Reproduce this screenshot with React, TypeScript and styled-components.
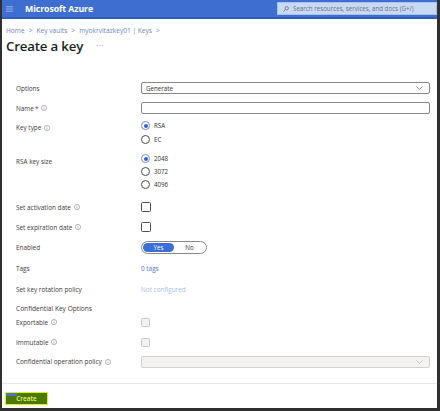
import { Fragment } from 'react'
import styled, { createGlobalStyle } from 'styled-components'

const GlobalStyle = createGlobalStyle`
  html, body {
    margin: 0;
    padding: 0;
    background: #ffffff;
  }
  body {
    font-family: 'Open Sans', 'Noto Sans', sans-serif;
    color: #323130;
  }
`

const Frame = styled.div`
  box-sizing: border-box;
  width: 440px;
  height: 411px;
  border-left: 2px solid #2f2f2f;
  border-right: 3px solid #2f2f2f;
  border-bottom: 3px solid #2f2f2f;
  display: flex;
  flex-direction: column;
  overflow: hidden;
`

const TopBar = styled.header`
  height: 17px;
  background: #3e6fd0;
  border-bottom: 2px solid #2f5dbd;
  display: flex;
  align-items: center;
  padding-left: 4px;
`

const Brand = styled.span`
  margin-left: 12px;
  font-size: 8.8px;
  font-weight: 700;
  color: #ffffff;
  letter-spacing: -0.1px;
`

const SearchBox = styled.div`
  margin-left: auto;
  width: 160px;
  height: 13px;
  box-sizing: border-box;
  background: #c8d9f4;
  border: 1px solid #a9c2ec;
  display: flex;
  align-items: center;
  gap: 4px;
  padding-left: 5px;
  font-size: 6.2px;
  color: #6b7280;
`

const Breadcrumb = styled.nav`
  margin: 7px 0 0 4px;
  font-size: 6.6px;
  color: #6d87c3;
  display: flex;
  align-items: center;
  gap: 4px;
`

const TitleRow = styled.div`
  margin: 2px 0 0 4px;
  display: flex;
  align-items: center;
  gap: 13px;
`

const Title = styled.h1`
  margin: 0;
  font-size: 13.3px;
  font-weight: 600;
  color: #201f1e;
  letter-spacing: -0.2px;
`

const More = styled.span`
  font-size: 8px;
  color: #8a8886;
  letter-spacing: 0.5px;
  margin-top: -3px;
`

const Form = styled.div`
  padding: 0 4px 0 14px;
  margin-top: 27px;
  display: flex;
  flex-direction: column;
`

const Row = styled.div<{ $gap: number; $h: number; $top?: boolean }>`
  margin-top: ${(p) => p.$gap}px;
  min-height: ${(p) => p.$h}px;
  display: grid;
  grid-template-columns: 125px 1fr;
  align-items: ${(p) => (p.$top ? 'start' : 'center')};
`

const Label = styled.div<{ $offset?: number }>`
  font-size: 6.4px;
  color: #3b3a39;
  display: flex;
  align-items: center;
  gap: 3px;
  margin-top: ${(p) => p.$offset ?? 0}px;
`

const Required = styled.span`
  color: #c50f1f;
  margin-left: -2px;
`

const SectionHeading = styled.div<{ $gap: number }>`
  margin-top: ${(p) => p.$gap}px;
  font-size: 6.6px;
  color: #3b3a39;
`

const Field = styled.div<{ $disabled?: boolean }>`
  box-sizing: border-box;
  height: 12px;
  border: 1px solid ${(p) => (p.$disabled ? '#d2d0ce' : '#8a8886')};
  border-radius: 2px;
  background: ${(p) => (p.$disabled ? '#f3f2f1' : '#ffffff')};
  display: flex;
  align-items: center;
  justify-content: space-between;
  padding: 0 6px 0 4px;
  font-size: 6.2px;
  color: #323130;
  margin-right: 3px;
`

const RadioList = styled.div<{ $step: number }>`
  display: flex;
  flex-direction: column;
  gap: ${(p) => p.$step}px;
`

const RadioItem = styled.label`
  display: flex;
  align-items: center;
  gap: 4px;
  font-size: 6.2px;
  color: #323130;
  height: 9px;
`

const RadioDot = styled.span<{ $on?: boolean }>`
  box-sizing: border-box;
  width: 9px;
  height: 9px;
  border-radius: 50%;
  border: 1px solid ${(p) => (p.$on ? '#6f8fd8' : '#4a4a4a')};
  display: flex;
  align-items: center;
  justify-content: center;
  &::after {
    content: '';
    width: 4px;
    height: 4px;
    border-radius: 50%;
    background: ${(p) => (p.$on ? '#2d62d4' : 'transparent')};
  }
`

const Check = styled.span<{ $disabled?: boolean }>`
  box-sizing: border-box;
  display: block;
  width: ${(p) => (p.$disabled ? 9 : 10)}px;
  height: ${(p) => (p.$disabled ? 9 : 10)}px;
  border-radius: 1.5px;
  border: 1px solid ${(p) => (p.$disabled ? '#c8c6c4' : '#505050')};
  background: ${(p) => (p.$disabled ? '#f3f2f1' : '#ffffff')};
`

const Toggle = styled.div`
  box-sizing: border-box;
  width: 66px;
  height: 13px;
  border: 1px solid #8a8886;
  border-radius: 7px;
  display: grid;
  grid-template-columns: 1fr 1fr;
  padding: 1px;
  font-size: 6.2px;
`

const ToggleOption = styled.span<{ $on?: boolean }>`
  border-radius: 5px;
  display: flex;
  align-items: center;
  justify-content: center;
  background: ${(p) => (p.$on ? '#3a6fd6' : 'transparent')};
  color: ${(p) => (p.$on ? '#ffffff' : '#323130')};
`

const Link = styled.span<{ $muted?: boolean }>`
  font-size: 6.4px;
  color: ${(p) => (p.$muted ? '#a8bde6' : '#4a74cc')};
`

const Divider = styled.hr`
  margin: auto 0 0 0;
  border: none;
  border-top: 1px solid #e6e6e6;
  width: 100%;
`

const Footer = styled.div`
  height: 24px;
  display: flex;
  align-items: flex-start;
  padding: 8px 0 0 3px;
  box-sizing: border-box;
`

const CreateButton = styled.button`
  position: relative;
  width: 43px;
  height: 13px;
  box-sizing: border-box;
  border: 1.5px solid #e4ef1a;
  background: #4a7a02;
  color: #eef27a;
  font-family: inherit;
  font-size: 6.4px;
  font-weight: 600;
  padding: 0;
  overflow: hidden;
  &::before {
    content: '';
    position: absolute;
    left: 0;
    top: 0;
    width: 12px;
    height: 3px;
    background: #4a73c9;
    transform: skewX(-30deg);
    transform-origin: top left;
  }
`

const Info = () => (
  <svg width="6" height="6" viewBox="0 0 12 12" fill="none">
    <circle cx="6" cy="6" r="5.2" stroke="#8a8886" strokeWidth="1.2" />
    <rect x="5.4" y="5" width="1.2" height="4" fill="#8a8886" />
    <rect x="5.4" y="3" width="1.2" height="1.2" fill="#8a8886" />
  </svg>
)

const Chevron = ({ color }: { color: string }) => (
  <svg width="7" height="4" viewBox="0 0 14 8" fill="none">
    <path d="M1 1l6 6 6-6" stroke={color} strokeWidth="1.4" />
  </svg>
)

const Burger = () => (
  <svg width="7" height="6" viewBox="0 0 14 12">
    <rect y="1" width="14" height="1.4" fill="#b9cdf2" />
    <rect y="5.3" width="14" height="1.4" fill="#b9cdf2" />
    <rect y="9.6" width="14" height="1.4" fill="#b9cdf2" />
  </svg>
)

const SearchIcon = () => (
  <svg width="6" height="6" viewBox="0 0 12 12" fill="none">
    <circle cx="7.5" cy="4.5" r="3.3" stroke="#555" strokeWidth="1.2" />
    <path d="M5.2 6.8L1 11" stroke="#555" strokeWidth="1.3" />
  </svg>
)

const crumbs = ['Home', 'Key vaults', 'myokrvitazkey01 | Keys']

export default function App() {
  return (
    <>
      <GlobalStyle />
      <Frame>
        <TopBar>
          <Burger />
          <Brand>Microsoft Azure</Brand>
          <SearchBox>
            <SearchIcon />
            Search resources, services, and docs (G+/)
          </SearchBox>
        </TopBar>

        <Breadcrumb>
          {crumbs.map((c) => (
            <Fragment key={c}>
              <span>{c}</span>
              <span>&gt;</span>
            </Fragment>
          ))}
        </Breadcrumb>

        <TitleRow>
          <Title>Create a key</Title>
          <More>···</More>
        </TitleRow>

        <Form>
          <Row $gap={0} $h={12}>
            <Label>Options</Label>
            <Field>
              Generate
              <Chevron color="#605e5c" />
            </Field>
          </Row>

          <Row $gap={8} $h={12}>
            <Label>
              Name <Required>*</Required> <Info />
            </Label>
            <Field />
          </Row>

          <Row $gap={7} $h={24} $top>
            <Label $offset={2}>
              Key type <Info />
            </Label>
            <RadioList $step={5}>
              <RadioItem>
                <RadioDot $on />
                RSA
              </RadioItem>
              <RadioItem>
                <RadioDot />
                EC
              </RadioItem>
            </RadioList>
          </Row>

          <Row $gap={9} $h={37} $top>
            <Label $offset={3}>RSA key size</Label>
            <RadioList $step={4}>
              <RadioItem>
                <RadioDot $on />
                2048
              </RadioItem>
              <RadioItem>
                <RadioDot />
                3072
              </RadioItem>
              <RadioItem>
                <RadioDot />
                4096
              </RadioItem>
            </RadioList>
          </Row>

          <Row $gap={11} $h={10}>
            <Label>
              Set activation date <Info />
            </Label>
            <Check />
          </Row>

          <Row $gap={10} $h={10}>
            <Label>
              Set expiration date <Info />
            </Label>
            <Check />
          </Row>

          <Row $gap={9} $h={13}>
            <Label>Enabled</Label>
            <Toggle>
              <ToggleOption $on>Yes</ToggleOption>
              <ToggleOption>No</ToggleOption>
            </Toggle>
          </Row>

          <Row $gap={8} $h={12}>
            <Label>Tags</Label>
            <Link>0 tags</Link>
          </Row>

          <Row $gap={9} $h={12}>
            <Label>Set key rotation policy</Label>
            <Link $muted>Not configured</Link>
          </Row>

          <SectionHeading $gap={9}>Confidential Key Options</SectionHeading>

          <Row $gap={4} $h={10}>
            <Label>
              Exportable <Info />
            </Label>
            <Check $disabled />
          </Row>

          <Row $gap={10} $h={10}>
            <Label>
              Immutable <Info />
            </Label>
            <Check $disabled />
          </Row>

          <Row $gap={8} $h={13}>
            <Label>
              Confidential operation policy <Info />
            </Label>
            <Field $disabled>
              <span />
              <Chevron color="#b3b0ad" />
            </Field>
          </Row>
        </Form>

        <Divider />
        <Footer>
          <CreateButton>Create</CreateButton>
        </Footer>
      </Frame>
    </>
  )
}
